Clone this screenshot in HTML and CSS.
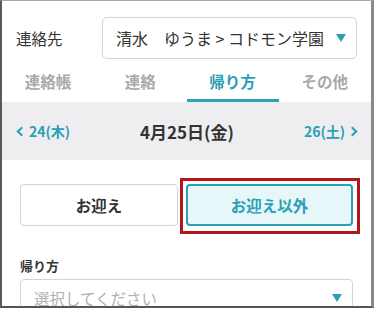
FILE: index.html
```html
<!DOCTYPE html>
<html lang="ja">
<head>
<meta charset="utf-8">
<link rel="stylesheet" href="styles.css">
</head>
<body>
<div class="frame">
  <div class="header">
    <div class="header-label">連絡先</div>
    <div class="select">
      <span class="select-text">清水　ゆうま &gt; コドモン学園</span>
      <span class="tri"></span>
    </div>
  </div>
  <div class="tabs">
    <div class="tab">連絡帳</div>
    <div class="tab">連絡</div>
    <div class="tab active">帰り方</div>
    <div class="tab">その他</div>
  </div>
  <div class="datebar">
    <div class="nav prev"><span class="chev chev-left"></span>24(木)</div>
    <div class="date">4月25日(金)</div>
    <div class="nav next">26(土)<span class="chev chev-right"></span></div>
  </div>
  <div class="body">
    <div class="toggles">
      <div class="toggle">お迎え</div>
      <div class="toggle selected">お迎え以外</div>
    </div>
    <div class="field-label">帰り方</div>
    <div class="input">
      <span class="placeholder">選択してください</span>
      <span class="tri"></span>
    </div>
  </div>
</div>
</body>
</html>
```
FILE: styles.css
```css
* { box-sizing: border-box; }
html, body { margin: 0; padding: 0; background: #fff; }
body {
  font-family: "Noto Sans CJK JP", "Noto Sans", sans-serif;
  color: #333;
  width: 375px;
  height: 309px;
  overflow: hidden;
}
.frame {
  width: 374px;
  height: 308px;
  border-top: 1px solid #a8a8a8;
  border-left: 2px solid #5a5a5a;
  border-right: 3px solid #8a8a8a;
  border-bottom: 2px solid #555;
  overflow: hidden;
}
.header {
  display: flex;
  align-items: center;
  padding: 16px 14px 0 14px;
}
.header-label {
  width: 86px;
  font-size: 15.5px;
  color: #333;
}
.select {
  flex: 1;
  height: 42px;
  border: 1px solid #d4d4d4;
  border-radius: 5px;
  display: flex;
  align-items: center;
  justify-content: space-between;
  padding: 0 10px 0 13px;
}
.select-text { font-size: 16px; color: #333; white-space: nowrap; }
.tri {
  width: 0; height: 0;
  border-left: 5px solid transparent;
  border-right: 5px solid transparent;
  border-top: 8px solid #2a9fb5;
}
.tabs {
  display: grid;
  grid-template-columns: repeat(4, 1fr);
  height: 43px;
}
.tab {
  display: flex;
  align-items: center;
  justify-content: center;
  font-size: 15.5px;
  font-weight: bold;
  color: #a9a9a9;
  border-bottom: 3px solid transparent;
  padding-top: 3px;
}
.tab.active { color: #2a9fb5; border-bottom-color: #2aa3b8; }
.datebar {
  height: 58px;
  background: #eeeef0;
  display: flex;
  align-items: center;
  justify-content: space-between;
  padding: 0 13px 0 14px;
}
.nav {
  font-size: 14px;
  font-weight: bold;
  color: #2a9fb5;
  display: flex;
  align-items: center;
  width: 60px;
}
.next { justify-content: flex-end; }
.chev {
  width: 7px; height: 7px;
  border-left: 2.5px solid #2a9fb5;
  border-bottom: 2.5px solid #2a9fb5;
  display: inline-block;
}
.chev-left { transform: rotate(45deg); margin-right: 4px; margin-left: 2px; }
.chev-right { transform: rotate(-135deg); margin-left: 4px; margin-right: 2px; }
.date { font-size: 17px; font-weight: bold; color: #333; }
.body { padding: 24px 18px 0 18px; }
.toggles {
  display: grid;
  grid-template-columns: 158px 1fr;
  gap: 8px;
}
.toggle {
  height: 42px;
  border: 1px solid #d4d4d4;
  border-radius: 4px;
  display: flex;
  align-items: center;
  justify-content: center;
  font-size: 15.5px;
  font-weight: bold;
  color: #333;
  position: relative;
}
.toggle.selected {
  background: #e7f6f9;
  border: 2px solid #2a9fb5;
  color: #2a9fb5;
}
.toggle.selected::after {
  content: "";
  position: absolute;
  top: -8px; left: -8px; right: -9px; bottom: -10px;
  border: 3px solid #b3151d;
}
.field-label {
  margin-top: 31px;
  font-size: 13px;
  font-weight: bold;
  line-height: 18px;
  color: #333;
}
.input {
  margin-top: 4px;
  height: 38px;
  border: 1px solid #d4d4d4;
  border-radius: 4px;
  display: flex;
  align-items: center;
  justify-content: space-between;
  padding: 0 10px 0 13px;
}
.placeholder { font-size: 15.5px; color: #b0b0b0; }
```
